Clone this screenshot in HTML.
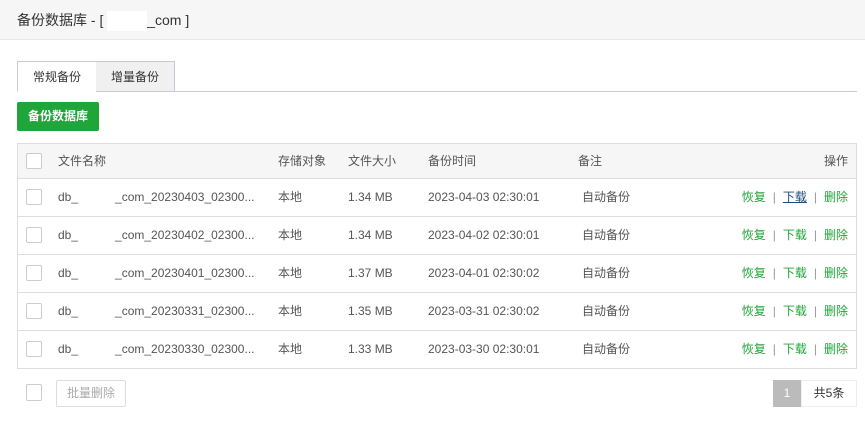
<!DOCTYPE html>
<html><head><meta charset="utf-8"><style>
*{margin:0;padding:0;box-sizing:border-box}
body{width:865px;height:428px;background:#fff;font-family:"Liberation Sans","Noto Sans CJK SC",sans-serif;font-size:12px;color:#555;position:relative;overflow:hidden}
.hd{position:absolute;left:0;top:0;width:865px;height:40px;background:#f6f6f6;border-bottom:1px solid #e8e8e8;font-size:14px;color:#333;line-height:40px;padding-left:17px}
.hd i{display:inline-block;width:40px;height:20px;background:#fff;vertical-align:middle}
.tabs{position:absolute;left:17px;top:61px;width:840px;height:31px;border-bottom:1px solid #ccc8d8}
.tab{position:absolute;top:0;height:31px;line-height:30px;text-align:center;border:1px solid #ccc8d8;color:#333}
.t1{left:0;width:80px;background:#fff;border-bottom:1px solid #fff}
.t2{left:79px;width:79px;background:#f0f0f0;border-left:none}
.btn{position:absolute;left:17px;top:102px;width:82px;height:29px;background:#20a53a;border-radius:2px;color:#fff;font-weight:bold;line-height:29px;text-align:center}
.tbl{position:absolute;left:17px;top:143px;width:840px;height:226px;border:1px solid #ddd}
.row{position:absolute;left:0;width:838px;height:38px;border-bottom:1px solid #ddd;line-height:37px}
.row.h{background:#f6f6f6;height:35px;line-height:34px}
.row span{position:absolute;top:0;white-space:nowrap}
.cb{position:absolute;left:8px;top:10px;width:16px;height:16px;border:1px solid #ccc;background:#fff;border-radius:2px}
.h .cb{top:9px}
.op{right:8px;color:#20a53a}
.op b{font-weight:normal;color:#999;margin:0 7px}
.u{color:#1e4c7a;text-decoration:underline}
.w{display:inline-block;width:37px}
.bb{position:absolute;left:26px;top:384px;width:16px;height:17px;border:1px solid #ccc;border-radius:2px}
.del{position:absolute;left:56px;top:380px;width:70px;height:27px;border:1px solid #ddd;border-radius:2px;color:#aaa;text-align:center;line-height:25px}
.pg1{position:absolute;left:773px;top:380px;width:28px;height:27px;background:#bbb;color:#fff;text-align:center;line-height:27px}
.pg2{position:absolute;left:801px;top:380px;width:56px;height:27px;border:1px solid #eee;color:#333;text-align:center;line-height:25px}
</style></head><body>
<div class="hd">备份数据库 - [ <i></i>_com ]</div>
<div class="tabs"><div class="tab t1">常规备份</div><div class="tab t2">增量备份</div></div>
<div class="btn">备份数据库</div>
<div class="tbl">
<div class="row h" style="top:0"><div class="cb"></div><span style="left:40px">文件名称</span><span style="left:260px">存储对象</span><span style="left:330px">文件大小</span><span style="left:410px">备份时间</span><span style="left:560px">备注</span><span style="right:8px">操作</span></div>
<div class="row" style="top:35px"><div class="cb"></div><span style="left:40px">db_<i class="w"></i>_com_20230403_02300...</span><span style="left:260px">本地</span><span style="left:330px">1.34 MB</span><span style="left:410px">2023-04-03 02:30:01</span><span style="left:564px">自动备份</span><span class="op">恢复<b>|</b><span class="u" style="position:static">下载</span><b>|</b>删除</span></div>
<div class="row" style="top:73px"><div class="cb"></div><span style="left:40px">db_<i class="w"></i>_com_20230402_02300...</span><span style="left:260px">本地</span><span style="left:330px">1.34 MB</span><span style="left:410px">2023-04-02 02:30:01</span><span style="left:564px">自动备份</span><span class="op">恢复<b>|</b>下载<b>|</b>删除</span></div>
<div class="row" style="top:111px"><div class="cb"></div><span style="left:40px">db_<i class="w"></i>_com_20230401_02300...</span><span style="left:260px">本地</span><span style="left:330px">1.37 MB</span><span style="left:410px">2023-04-01 02:30:02</span><span style="left:564px">自动备份</span><span class="op">恢复<b>|</b>下载<b>|</b>删除</span></div>
<div class="row" style="top:149px"><div class="cb"></div><span style="left:40px">db_<i class="w"></i>_com_20230331_02300...</span><span style="left:260px">本地</span><span style="left:330px">1.35 MB</span><span style="left:410px">2023-03-31 02:30:02</span><span style="left:564px">自动备份</span><span class="op">恢复<b>|</b>下载<b>|</b>删除</span></div>
<div class="row" style="top:187px;border-bottom:none"><div class="cb"></div><span style="left:40px">db_<i class="w"></i>_com_20230330_02300...</span><span style="left:260px">本地</span><span style="left:330px">1.33 MB</span><span style="left:410px">2023-03-30 02:30:01</span><span style="left:564px">自动备份</span><span class="op">恢复<b>|</b>下载<b>|</b>删除</span></div>
</div>
<div class="bb"></div>
<div class="del">批量删除</div>
<div class="pg1">1</div><div class="pg2">共5条</div>
</body></html>
